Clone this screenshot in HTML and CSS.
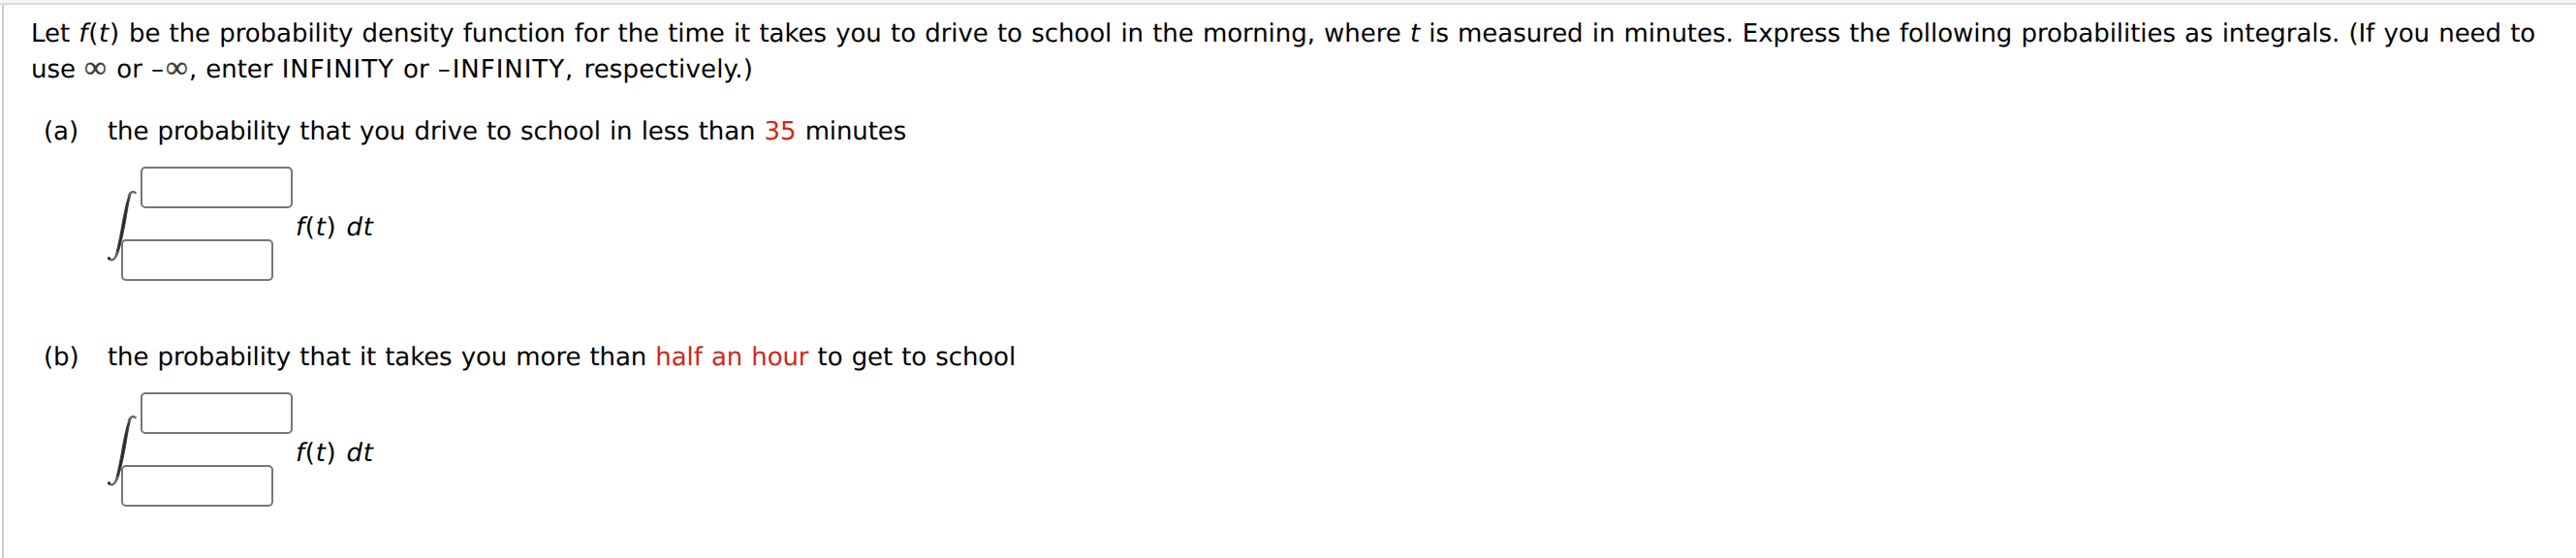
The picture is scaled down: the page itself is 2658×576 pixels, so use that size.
FILE: index.html
```html
<!DOCTYPE html>
<html lang="en">
<head>
<meta charset="utf-8">
<title>Probability density</title>
<link rel="stylesheet" href="styles.css">
</head>
<body>
<main class="question">
  <p class="intro">Let <span class="fn"><i>f</i>(<i>t</i>)</span> be the probability density function for the time it takes you to drive to school in the morning, where <i>t</i> is measured in minutes. Express the following probabilities as integrals. (If you need to<br>use <span class="inf">∞</span> or <span class="minus">–</span><span class="inf">∞</span>, enter <span class="caps">INFINITY</span> or <span class="minus">–</span><span class="caps">INFINITY</span>, <span class="tail">respectively.)</span></p>
  <section class="part">
    <span class="label">(a)</span>
    <div class="body">
      <p class="prompt">the probability that you drive to school in less than <span class="value">35</span> minutes</p>
      <div class="integral">
        <svg class="sign" viewBox="0 0 30 74"><path class="stem" d="M22.500 5C19.500 11 17.500 23 15.500 33C13.500 45 11 58 8 69L10 67C14 57 15.500 47 18 35C20 24 21.500 11 24 4Z"/><path class="hook" d="M29.500 3.500C26 1 23.500 1.500 21.500 7M.5 71C5 74 8 72 10.500 64"/><circle class="dot" cx="1.500" cy="70.500" r="1.600"/></svg>
        <div class="limits"><input class="limit upper" aria-label="Upper limit"><input class="limit" aria-label="Lower limit"></div>
        <span class="integrand fn"><i>f</i>(<i>t</i>)&nbsp;<i>dt</i></span>
      </div>
    </div>
  </section>
  <section class="part second">
    <span class="label">(b)</span>
    <div class="body">
      <p class="prompt">the probability that it takes you more than <span class="value">half an hour</span> to get to school</p>
      <div class="integral">
        <svg class="sign" viewBox="0 0 30 74"><path class="stem" d="M22.500 5C19.500 11 17.500 23 15.500 33C13.500 45 11 58 8 69L10 67C14 57 15.500 47 18 35C20 24 21.500 11 24 4Z"/><path class="hook" d="M29.500 3.500C26 1 23.500 1.500 21.500 7M.5 71C5 74 8 72 10.500 64"/><circle class="dot" cx="1.500" cy="70.500" r="1.600"/></svg>
        <div class="limits"><input class="limit upper" aria-label="Upper limit"><input class="limit" aria-label="Lower limit"></div>
        <span class="integrand fn"><i>f</i>(<i>t</i>)&nbsp;<i>dt</i></span>
      </div>
    </div>
  </section>
</main>
</body>
</html>
```
FILE: styles.css
```css
* { box-sizing: border-box; }
body {
  margin: 0;
  height: 576px;
  padding: 5px 0 0 2px;
  overflow: hidden;
  background: linear-gradient(#f5f5f5 3px, #ddd 3px 5px, #fff 5px);
  font: 26px/37px "DejaVu Sans", sans-serif;
  letter-spacing: -0.1px;
  word-spacing: 1px;
  color: #000;
  text-rendering: geometricPrecision;
}
p { margin: 0; white-space: nowrap; }
.question { height: 571px; padding: 12px 0 0 28px; border-left: 2px solid #ccc; }
.intro { letter-spacing: -0.055px; }
.fn { letter-spacing: 0.7px; }
.caps { letter-spacing: 0.95px; }
.tail { margin-left: 2px; letter-spacing: 0.15px; }
.minus { margin-right: 2px; }
.inf { display: inline-block; width: 24px; font: 32px/20px "Liberation Serif", serif; color: #333; letter-spacing: 0; -webkit-text-stroke: 0.5px #555; }
.part { display: flex; height: 233px; padding: 27px 0 0 13px; }
.label { width: 66px; }
.integral { display: flex; height: 118px; margin-top: 17px; }
.sign { width: 30px; height: 74px; margin-top: 24px; }
.stem { fill: #222; stroke: #444; stroke-width: 1.2; }
.hook { fill: none; stroke: #666; stroke-width: 2.4; }
.dot { fill: #333; }
.second .sign { margin-top: 23px; }
.limits { display: flex; flex-direction: column; gap: 32px; width: 161px; margin-left: -16px; }
.limit { width: 157px; height: 43px; margin: 0; padding: 2px 8px; border: 2px solid #767676; border-radius: 5px; background: transparent; font: inherit; outline: 0; }
.upper { margin-left: 20px; }
.integrand { margin: 45px 0 0 19px; white-space: nowrap; }
.value { color: #d12717; }
```
